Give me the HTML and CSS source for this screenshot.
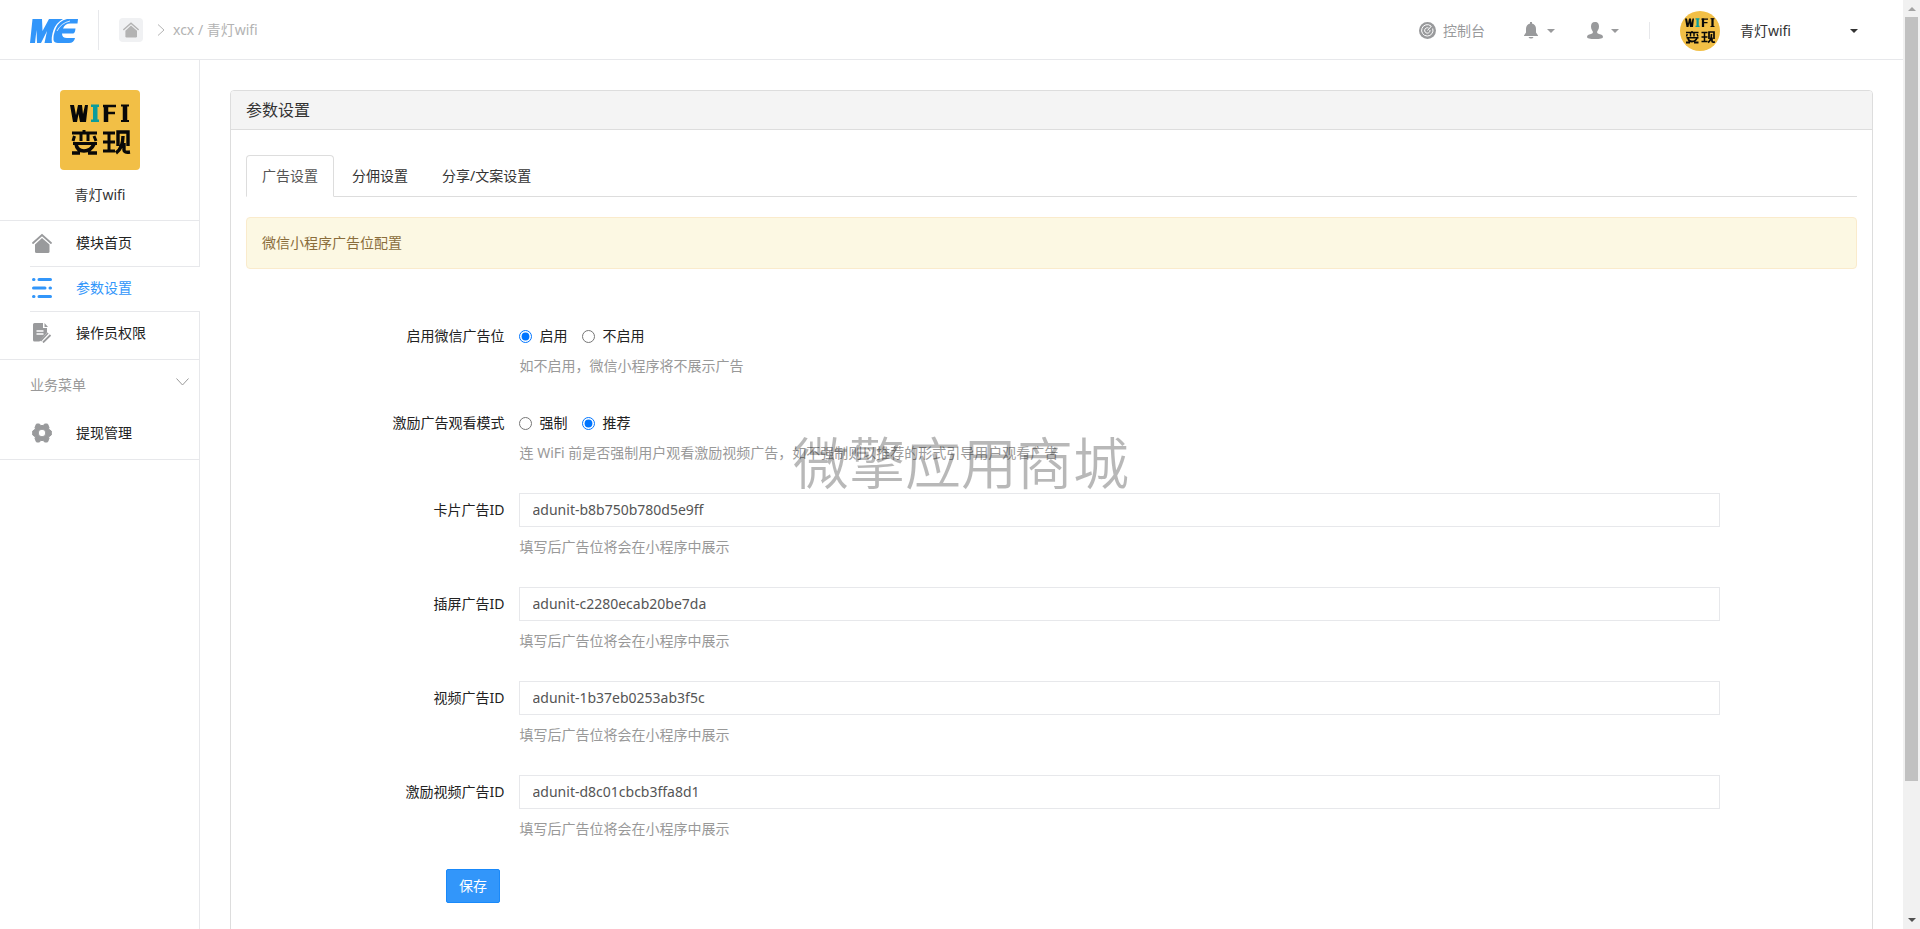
FILE: index.html
```html
<!DOCTYPE html>
<html lang="zh-CN">
<head>
<meta charset="utf-8">
<title>参数设置</title>
<link rel="stylesheet" href="styles.css">
</head>
<body>
<svg class="defs" aria-hidden="true">
  <symbol id="home" viewBox="0 0 20 20"><path d="M1 10 10 2l9 8" fill="none" stroke="currentColor" stroke-width="1.8" stroke-linecap="round"/><path d="M10 5 17.500 11.600V18.500Q17.500 20 16 20H4.500Q3 20 3 18.500V11.600z" fill="currentColor"/></symbol>
  <symbol id="wifi-art" viewBox="0 0 80 80">
    <rect width="80" height="80" fill="#f2bf46"/>
    <path d="M10 15H14L16 25 18 15H22L23 24 25 15H28L26 32H20L18.500 24 17 32H13z" fill="#080808"/>
    <g fill="none" stroke="#080808" stroke-width="4.500">
      <path d="M46 15V32"/><path d="M43 16H56M46 23H55" stroke-width="2.500"/><path d="M61 15.500H69M61 31H69" stroke-width="2"/><path d="M65 15V31"/>
    </g>
    <path d="M31 14.500H39V17H37.500V29.500H39V32H31V29.500H33V17H31z" fill="#0b9c9c"/>
    <g fill="none" stroke="#080808" stroke-width="3">
      <path d="M24 40V44M12 43H37M21 43V51M28 43V51"/><path d="M14.500 46 13 51M34 46 36 51M13 53.500H37" stroke-width="3"/><path d="M16 54Q17 61 24 61T34 54M12 63H20M28 63H37" stroke-width="3.600"/>
      <path d="M43 43H55M43 52H55M43 61H55M49 43V60"/><path d="M58 56V42H68V56M63 46Q63 58 56 63M64 53V60Q64 63 70 62" stroke-width="3.400"/>
    </g>
  </symbol>
</svg>
<div class="window">
  <div class="page">
    <header class="topbar">
      <a class="brand" href="#" aria-label="首页">
        <svg width="48" height="24" viewBox="0 0 48 24"><path fill="#3296fa" d="M2.500 0H12L12.500 12 19 0H33Q26 4 23.500 11Q21 18 22 24H14.500L17 12 11 24H7L6.500 11 5 24H0z"/><path fill="#3296fa" d="M48 0H37Q29 2 26 9Q23 16 23.500 21Q24 24 28 24H39Q44 24 45 19H37Q32 19 32 14.500H43Q45 14.500 45.500 9.500H33Q35 4.500 40 4.500H47.500z"/><path d="M27 12Q31 4 40 2" fill="none" stroke="#fff" stroke-width=".8"/></svg>
      </a>
      <nav class="crumbs">
        <a class="crumb-home" href="#" aria-label="主页"><svg width="16" height="17"><use href="#home"/></svg></a>
        <svg width="8" height="12" viewBox="0 0 8 12"><path d="M1 .5 7 6 1 11.500" fill="none" stroke="#b3b3b3"/></svg>
        <span>xcx / 青灯wifi</span>
      </nav>
      <nav class="tools">
        <a class="tool console" href="#"><svg width="17" height="17" viewBox="0 0 17 17"><circle cx="8.500" cy="8.500" r="8.500" fill="currentColor"/><path d="M12 4A5.700 5.700 0 1 0 13.700 6.500M9.500 6A2.700 2.700 0 1 0 11 8M8.500 8.500 12.500 4" fill="none" stroke="#fff" stroke-width="1"/></svg>控制台</a>
        <button class="tool bell" type="button" aria-label="消息"><svg width="14" height="17" viewBox="0 0 14 17" fill="currentColor"><path d="M6 0H8V1.500Q12 2.500 12 7V10.500L14 13.500V14H0V13.500L2 10.500V7Q2 2.500 6 1.500zM4.500 15H9.500Q9 16.500 7 16.500T4.500 15z"/></svg><i class="caret"></i></button>
        <button class="tool person" type="button" aria-label="用户"><svg width="16" height="17" viewBox="0 0 16 17" fill="currentColor"><path d="M8 0C11 0 12 2 12 4.500C12 7.500 10.500 8.500 10 10Q10 11.500 12 12Q16 12.700 16 15Q16 17 8 17T0 15Q0 12.700 4 12Q6 11.500 6 10C5.500 8.500 4 7.500 4 4.500C4 2 5 0 8 0z"/></svg><i class="caret"></i></button>
        <button class="account" type="button"><svg class="avatar" width="40" height="40"><use href="#wifi-art"/></svg><span>青灯wifi</span><i class="caret"></i></button>
      </nav>
    </header>
    <div class="body">
      <aside class="sidebar">
        <div class="profile"><svg class="cover" width="80" height="80"><use href="#wifi-art"/></svg><span>青灯wifi</span></div>
        <nav>
          <a class="item" href="#"><svg width="20" height="20"><use href="#home"/></svg>模块首页</a>
          <a class="item active" href="#"><svg width="20" height="20" viewBox="0 0 20 20"><path d="M1.500 1.500H2M7 1.500H18.500M1.500 10H13M18 10H18.500M1.500 18.500H2M7 18.500H18.500" fill="none" stroke="currentColor" stroke-width="3" stroke-linecap="round"/></svg>参数设置</a>
          <a class="item last" href="#"><svg width="20" height="20" viewBox="0 0 20 20"><path d="M2.500 0H11V5H15V9.500L7.500 18.500H2.500Q1 18.500 1 17V1.500Q1 0 2.500 0z" fill="currentColor"/><path d="M12.500 0 16 4H12.500z" fill="currentColor"/><path d="M4.500 8H11.500M4.500 11H11.500" stroke="#fff" stroke-width="1.300"/><path d="M10 19.500 18.500 11" stroke="#fff" stroke-width="4"/><path d="M11 19.500 18.500 12M8.500 18 16 10" stroke="currentColor" stroke-width="1.800"/></svg>操作员权限</a>
          <button class="group" type="button">业务菜单<svg width="13" height="8" viewBox="0 0 13 8"><path d="M.5.5 6.500 7 12.500.5" fill="none" stroke="currentColor"/></svg></button>
          <a class="item manage" href="#"><svg width="20" height="20" viewBox="0 0 20 20"><path fill="currentColor" stroke="currentColor" stroke-linejoin="round" fill-rule="evenodd" d="M4.500 1H7.500L8.500 2.500H11.500L12.500 1H15.500L17 4.500 16.500 6 19.300 8V12L16.500 14 17 15.500 15.500 19H12.500L11.500 17.500H8.500L7.500 19H4.500L3 15.500 3.500 14 .7 12V8L3.500 6 3 4.500zM10 6.200A3.800 3.800 0 1 0 10 13.800A3.800 3.800 0 1 0 10 6.200z"/></svg>提现管理</a>
        </nav>
      </aside>
      <main>
        <section class="panel">
          <h1>参数设置</h1>
          <div class="panel-body">
            <nav class="tabs"><a class="current" href="#">广告设置</a><a href="#">分佣设置</a><a href="#">分享/文案设置</a></nav>
            <p class="alert">微信小程序广告位配置</p>
            <form>
              <div class="row" role="radiogroup" aria-labelledby="ad-label">
                <span class="label" id="ad-label">启用微信广告位</span>
                <div class="control"><div class="choices"><label><input type="radio" name="ad" checked>启用</label><label><input type="radio" name="ad">不启用</label></div><p class="help">如不启用，微信小程序将不展示广告</p></div>
              </div>
              <div class="row" role="radiogroup" aria-labelledby="mode-label">
                <span class="label" id="mode-label">激励广告观看模式</span>
                <div class="control"><div class="choices"><label><input type="radio" name="mode">强制</label><label><input type="radio" name="mode" checked>推荐</label></div><p class="help">连 WiFi 前是否强制用户观看激励视频广告，如不强制则以推荐的形式引导用户观看广告</p></div>
              </div>
              <div class="row"><label class="label" for="card">卡片广告ID</label><div class="control"><input class="text" id="card" type="text" value="adunit-b8b750b780d5e9ff"><p class="help">填写后广告位将会在小程序中展示</p></div></div>
              <div class="row"><label class="label" for="insert">插屏广告ID</label><div class="control"><input class="text" id="insert" type="text" value="adunit-c2280ecab20be7da"><p class="help">填写后广告位将会在小程序中展示</p></div></div>
              <div class="row"><label class="label" for="video">视频广告ID</label><div class="control"><input class="text" id="video" type="text" value="adunit-1b37eb0253ab3f5c"><p class="help">填写后广告位将会在小程序中展示</p></div></div>
              <div class="row"><label class="label" for="reward">激励视频广告ID</label><div class="control"><input class="text" id="reward" type="text" value="adunit-d8c01cbcb3ffa8d1"><p class="help">填写后广告位将会在小程序中展示</p></div></div>
              <button class="save" type="submit">保存</button>
            </form>
          </div>
        </section>
      </main>
    </div>
  </div>
  <div class="scrollbar" aria-hidden="true"><i class="up"></i><div class="track"><div class="thumb"></div><div class="rest"></div></div><i class="down"></i></div>
</div>
<div class="watermark">微擎应用商城</div>
</body>
</html>
```
FILE: styles.css
```css
* { box-sizing: border-box; }
body {
  margin: 0;
  font: 14px/20px "Noto Sans", "Noto Sans CJK SC", sans-serif;
  color: #333;
  background: #fff;
}
a { color: inherit; text-decoration: none; }
button { font: inherit; color: inherit; background: none; border: 0; padding: 0; cursor: pointer; }
p { margin: 0; }
svg { display: block; flex: none; }
.defs { position: absolute; width: 0; height: 0; }

.window { display: flex; height: 100vh; overflow: hidden; }
.page { flex: 1; min-width: 0; display: flex; flex-direction: column; overflow: hidden; }

.topbar { display: flex; align-items: center; flex: none; height: 60px; border-bottom: 1px solid #e7e8eb; }
.brand { display: flex; align-items: center; height: 40px; padding: 2px 20px 0 30px; border-right: 1px solid #e7e8eb; }
.crumbs { display: flex; align-items: center; color: #b3b3b3; }
.crumb-home { display: grid; place-items: center; width: 24px; height: 24px; margin: 0 14px 0 20px; border-radius: 4px; background: #f0f1f3; }
.crumbs span { margin-left: 8px; }

.tools { display: flex; align-items: center; margin-left: auto; padding: 2px 45px 0 0; color: #999a9c; }
.tool { display: flex; align-items: center; }
.console { gap: 7px; margin-right: 39px; }
.bell { gap: 9px; margin-right: 32px; }
.person { gap: 8px; padding-right: 30px; border-right: 1px solid #e7e8eb; }
.caret { border: 4px solid transparent; border-top-color: currentColor; border-bottom: 0; }
.account { display: flex; align-items: center; margin-left: 30px; color: #333; }
.account span { width: 110px; margin-left: 20px; text-align: left; }
.avatar { border-radius: 50%; }

.body { display: flex; flex: 1; }
.sidebar { flex: none; width: 200px; background: linear-gradient(#e7e8eb, #e7e8eb) right / 1px 100% no-repeat; }
.profile { display: flex; flex-direction: column; align-items: center; gap: 15px; padding: 30px 0 15px; border-bottom: 1px solid #e7e8eb; }
.cover { border-radius: 4px; }
.item { display: flex; align-items: center; gap: 24px; height: 45px; margin-left: 30px; padding: 0 0 2px 2px; color: #222; border-bottom: 1px solid #e7e8eb; }
.item svg { color: #999a9c; }
.item:first-child { height: 46px; }
.item.active { color: #3296fa; background: #fff; }
.item.active svg { color: #3296fa; }
.item.last { height: 48px; margin-left: 0; padding: 0 0 6px 32px; }
.group { display: flex; justify-content: space-between; align-items: center; width: 100%; height: 50px; padding: 0 11px 0 30px; color: #999; }
.group svg { margin-bottom: 6px; }
.item.manage { height: 50px; margin-left: 0; padding: 0 0 4px 32px; }

main { flex: 1; min-width: 0; padding: 30px; }
.panel { border: 1px solid #ddd; border-radius: 4px; }
.panel h1 { margin: 0; padding: 9px 15px; font-size: 16px; line-height: 20px; font-weight: 400; background: #f4f4f4; border-bottom: 1px solid #ddd; border-radius: 3px 3px 0 0; }
.panel-body { padding: 25px 15px 60px; }
.tabs { display: flex; gap: 2px; border-bottom: 1px solid #ddd; }
.tabs a { padding: 10px 15px; border: 1px solid transparent; margin-bottom: -1px; border-radius: 4px 4px 0 0; }
.tabs .current { color: #555; background: #fff; border-color: #ddd #ddd #fff; }
.alert { margin: 20px 0 50px; padding: 15px; border: 1px solid #faebcc; border-radius: 4px; color: #8a6d3b; background: #fcf8e3; }

.row { display: grid; grid-template-columns: 2fr 9fr 1fr; margin: 0 -15px 30px; }
.label { padding-top: 7px; text-align: right; color: #222; }
.control { padding: 0 15px 0 14px; }
.choices { display: flex; gap: 14px; padding-top: 7px; color: #222; }
.choices label { display: flex; align-items: center; gap: 8px; }
.choices input { width: 13px; height: 13px; margin: 0; accent-color: #0075ff; }
.text { display: block; width: 100%; height: 34px; padding: 0 13px 2px; font: inherit; color: #555; border: 1px solid #e7e8eb; background: #fff; }
.help { padding: 10px 0 0 1px; color: #999; }
.save { display: block; height: 34px; margin-left: 200px; padding: 0 12px; color: #fff; background: #3296fa; border: 1px solid #1989fa; border-radius: 2px; }

.scrollbar { display: flex; flex-direction: column; align-items: center; flex: none; width: 17px; background: #f1f1f1; }
.up, .down { border: solid transparent; }
.up { margin: 7px 0 6px; border-width: 0 4px 4px; border-bottom-color: #a3a3a3; }
.down { margin: 7px 0; border-width: 4px 4px 0; border-top-color: #505050; }
.track { flex: 1; display: flex; flex-direction: column; }
.thumb { flex: 764; width: 13px; background: #c1c1c1; }
.rest { flex: 130; }

.watermark { position: fixed; inset: 0; display: grid; place-items: center; padding: 0 0 10px 2px; font: 350 56px/60px "Noto Sans CJK SC", sans-serif; color: rgba(0, 0, 0, .28); pointer-events: none; }
```
